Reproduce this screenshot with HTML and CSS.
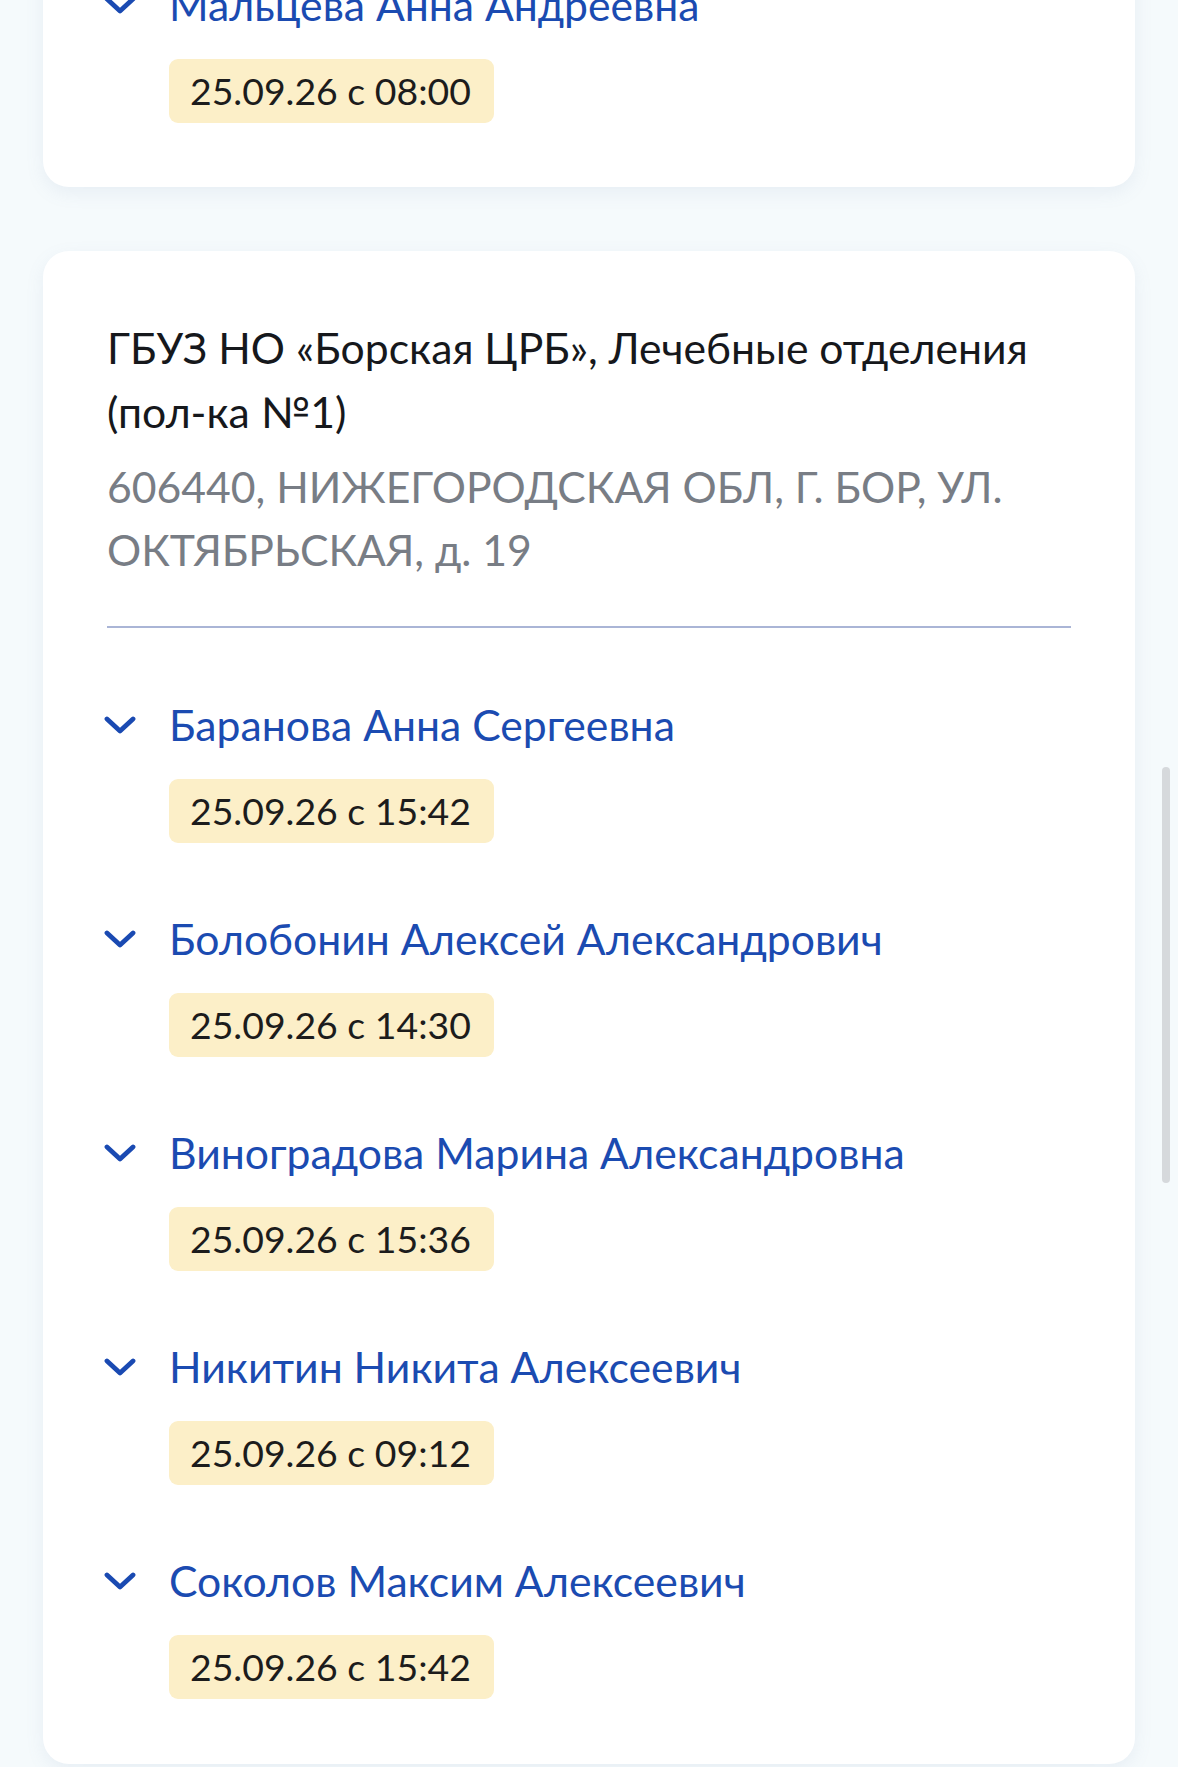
FILE: index.html
```html
<!DOCTYPE html>
<html lang="ru">
<head>
<meta charset="utf-8">
<title>Записи</title>
<link rel="stylesheet" href="styles.css">
</head>
<body>
<div class="page">
  <section class="card card--first">
    <ul class="doctors">
      <li class="doctor">
        <div class="doctor__row">
          <svg class="chev" viewBox="0 0 32 18" aria-hidden="true"><path d="M3 3 L16 15 L29 3"/></svg>
          <span class="doctor__name">Мальцева Анна Андреевна</span>
        </div>
        <div class="slot">25.09.26 с 08:00</div>
      </li>
    </ul>
  </section>

  <section class="card">
    <h2 class="clinic">ГБУЗ НО «Борская ЦРБ», Лечебные отделения (пол-ка №1)</h2>
    <p class="address">606440, НИЖЕГОРОДСКАЯ ОБЛ, Г. БОР, УЛ. ОКТЯБРЬСКАЯ, д. 19</p>
    <hr class="divider">
    <ul class="doctors">
      <li class="doctor">
        <div class="doctor__row">
          <svg class="chev" viewBox="0 0 32 18" aria-hidden="true"><path d="M3 3 L16 15 L29 3"/></svg>
          <span class="doctor__name">Баранова Анна Сергеевна</span>
        </div>
        <div class="slot">25.09.26 с 15:42</div>
      </li>
      <li class="doctor">
        <div class="doctor__row">
          <svg class="chev" viewBox="0 0 32 18" aria-hidden="true"><path d="M3 3 L16 15 L29 3"/></svg>
          <span class="doctor__name">Болобонин Алексей Александрович</span>
        </div>
        <div class="slot">25.09.26 с 14:30</div>
      </li>
      <li class="doctor">
        <div class="doctor__row">
          <svg class="chev" viewBox="0 0 32 18" aria-hidden="true"><path d="M3 3 L16 15 L29 3"/></svg>
          <span class="doctor__name">Виноградова Марина Александровна</span>
        </div>
        <div class="slot">25.09.26 с 15:36</div>
      </li>
      <li class="doctor">
        <div class="doctor__row">
          <svg class="chev" viewBox="0 0 32 18" aria-hidden="true"><path d="M3 3 L16 15 L29 3"/></svg>
          <span class="doctor__name">Никитин Никита Алексеевич</span>
        </div>
        <div class="slot">25.09.26 с 09:12</div>
      </li>
      <li class="doctor">
        <div class="doctor__row">
          <svg class="chev" viewBox="0 0 32 18" aria-hidden="true"><path d="M3 3 L16 15 L29 3"/></svg>
          <span class="doctor__name">Соколов Максим Алексеевич</span>
        </div>
        <div class="slot">25.09.26 с 15:42</div>
      </li>
    </ul>
  </section>
</div>
<div class="scrollbar"></div>
</body>
</html>
```

FILE: styles.css
```css
html, body {
  margin: 0;
  padding: 0;
}
body {
  background: #f5fafc;
  font-family: Lato, "Noto Sans", sans-serif;
  color: #1d1d1f;
  overflow: hidden;
  height: 1767px;
}
.page {
  display: flex;
  flex-direction: column;
  gap: 64px;
  margin-top: -88px;
  padding: 0 43px;
}
.card {
  background: #ffffff;
  border-radius: 26px;
  box-shadow: 0 6px 18px rgba(120, 140, 180, 0.10);
  padding: 65px 64px 65px;
}
.card--first {
  padding-bottom: 64px;
}
.clinic {
  margin: 0;
  font-weight: 400;
  font-size: 42.7px;
  line-height: 64px;
  color: #16181c;
}
.address {
  margin: 11px 0 0;
  font-size: 42.7px;
  line-height: 63px;
  color: #787d85;
}
.divider {
  border: 0;
  height: 2px;
  background: #aab5d6;
  margin: 45px 0 69px;
}
.doctors {
  list-style: none;
  margin: 0;
  padding: 0;
  display: flex;
  flex-direction: column;
  gap: 68px;
}
.doctor {
  display: flex;
  flex-direction: column;
  align-items: flex-start;
  gap: 26px;
}
.doctor__row {
  display: flex;
  align-items: center;
  height: 56px;
  margin-left: -3px;
}
.chev {
  width: 32px;
  height: 18px;
  flex: none;
  margin-right: 33px;
}
.chev path {
  fill: none;
  stroke: #1a4ab2;
  stroke-width: 4.8;
  stroke-linecap: round;
  stroke-linejoin: round;
}
.doctor__name {
  font-size: 42.7px;
  line-height: 56px;
  color: #1b4bb1;
  white-space: nowrap;
}
.slot {
  margin-left: 62px;
  height: 64px;
  line-height: 64px;
  padding: 0 23px 0 21px;
  background: #fcefc8;
  border-radius: 9px;
  font-size: 37.4px;
  color: #1c1c1c;
  white-space: nowrap;
}
.scrollbar {
  position: fixed;
  right: 8px;
  top: 767px;
  width: 8px;
  height: 416px;
  border-radius: 4px;
  background: #d6d9dc;
}
```
